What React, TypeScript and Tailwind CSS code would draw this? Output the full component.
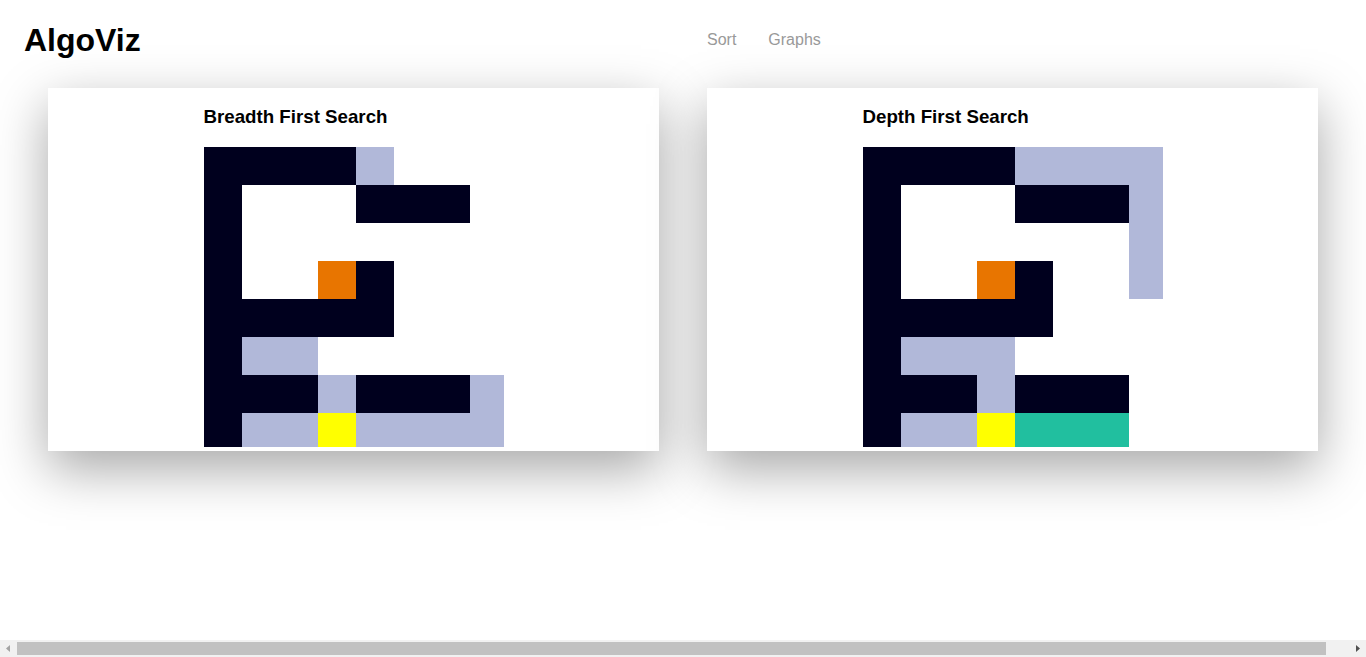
import React from 'react';

// cell codes: 0 empty, 1 wall, 2 visited, 3 start, 4 target, 5 path
const COLORS: Record<number, string> = {
  0: 'bg-white',
  1: 'bg-[#00001e]',
  2: 'bg-[#b1b8d9]',
  3: 'bg-[#e87500]',
  4: 'bg-[#ffff00]',
  5: 'bg-[#21bf9f]',
};

const bfsGrid = [
  [1, 1, 1, 1, 2, 0, 0, 0],
  [1, 0, 0, 0, 1, 1, 1, 0],
  [1, 0, 0, 0, 0, 0, 0, 0],
  [1, 0, 0, 3, 1, 0, 0, 0],
  [1, 1, 1, 1, 1, 0, 0, 0],
  [1, 2, 2, 0, 0, 0, 0, 0],
  [1, 1, 1, 2, 1, 1, 1, 2],
  [1, 2, 2, 4, 2, 2, 2, 2],
];

const dfsGrid = [
  [1, 1, 1, 1, 2, 2, 2, 2],
  [1, 0, 0, 0, 1, 1, 1, 2],
  [1, 0, 0, 0, 0, 0, 0, 2],
  [1, 0, 0, 3, 1, 0, 0, 2],
  [1, 1, 1, 1, 1, 0, 0, 0],
  [1, 2, 2, 2, 0, 0, 0, 0],
  [1, 1, 1, 2, 1, 1, 1, 0],
  [1, 2, 2, 4, 5, 5, 5, 0],
];

const Maze: React.FC<{ grid: number[][] }> = ({ grid }) => (
  <div className="w-[300px] h-[300px] overflow-hidden">
    <div className="grid grid-cols-[repeat(8,38px)] grid-rows-[repeat(8,38px)] w-[304px]">
      {grid.flatMap((row, r) =>
        row.map((c, i) => <div key={`${r}-${i}`} className={COLORS[c]} />)
      )}
    </div>
  </div>
);

const Card: React.FC<{ title: string; grid: number[][] }> = ({ title, grid }) => (
  <div className="w-[611px] h-[363px] bg-white flex justify-center shadow-[0_18px_50px_rgba(0,0,0,0.35)]">
    <div className="w-[300px] pt-[18px]">
      <h3 className="text-[18.72px] leading-[22px] font-bold text-black mb-[19px]">{title}</h3>
      <Maze grid={grid} />
    </div>
  </div>
);

const ScrollBar = () => (
  <div className="fixed left-0 bottom-0 w-full h-[17px] bg-[#f1f1f1] flex items-center">
    <svg width="17" height="17" viewBox="0 0 17 17" className="shrink-0">
      <path d="M10 5 L6 8.5 L10 12 Z" fill="#a3a3a3" />
    </svg>
    <div className="ml-0 w-[1309px] h-[13px] bg-[#c1c1c1]" />
    <div className="flex-1" />
    <svg width="17" height="17" viewBox="0 0 17 17" className="shrink-0">
      <path d="M7 5 L11 8.5 L7 12 Z" fill="#505050" />
    </svg>
  </div>
);

export default function App() {
  return (
    <div className="min-w-[1400px] min-h-[640px] bg-white font-['Liberation_Sans',Arial,sans-serif]">
      <header className="h-20 flex items-center pl-6">
        <h1 className="text-[32px] font-bold text-black w-[683px]">AlgoViz</h1>
        <nav className="flex gap-8 text-base text-[#999]">
          <a>Sort</a>
          <a>Graphs</a>
        </nav>
      </header>
      <main className="flex gap-12 pl-12 mt-2">
        <Card title="Breadth First Search" grid={bfsGrid} />
        <Card title="Depth First Search" grid={dfsGrid} />
      </main>
      <ScrollBar />
    </div>
  );
}
